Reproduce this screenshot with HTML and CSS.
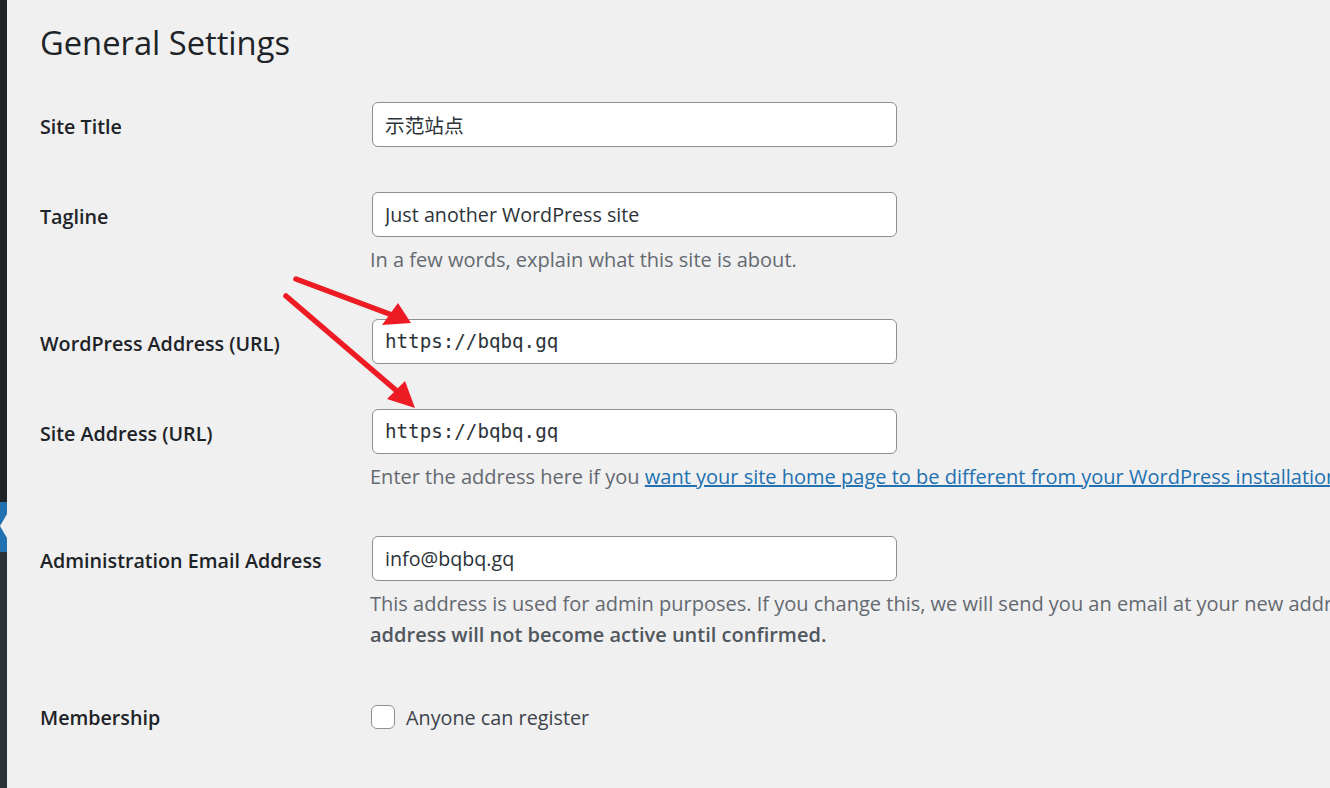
FILE: index.html
```html
<!DOCTYPE html>
<html lang="en">
<head>
<meta charset="utf-8">
<title>General Settings</title>
<link rel="stylesheet" href="styles.css">
</head>
<body>
<nav class="adminmenu">
  <div class="menu-top"></div>
  <div class="menu-current"></div>
  <div class="menu-sub"></div>
</nav>
<main class="content">
  <h1 class="title">General Settings</h1>
  <form class="settings">
    <div class="row">
      <label class="label" for="blogname">Site Title</label>
      <div class="field"><input class="text" id="blogname" type="text" value="示范站点"></div>
    </div>
    <div class="row">
      <label class="label" for="blogdescription">Tagline</label>
      <div class="field">
        <input class="text" id="blogdescription" type="text" value="Just another WordPress site">
        <p class="desc">In a few words, explain what this site is about.</p>
      </div>
    </div>
    <div class="row">
      <label class="label" for="siteurl">WordPress Address (URL)</label>
      <div class="field"><input class="text code" id="siteurl" type="text" value="https://bqbq.gq"></div>
    </div>
    <div class="row">
      <label class="label" for="home">Site Address (URL)</label>
      <div class="field">
        <input class="text code" id="home" type="text" value="https://bqbq.gq">
        <p class="desc">Enter the address here if you <a href="#">want your site home page to be different from your WordPress installation directory</a>.</p>
      </div>
    </div>
    <div class="row">
      <label class="label" for="email">Administration Email Address</label>
      <div class="field">
        <input class="text" id="email" type="text" value="info@bqbq.gq">
        <p class="desc">This address is used for admin purposes. If you change this, we will send you an email at your new address to confirm it. <strong>The new</strong><br><strong>address will not become active until confirmed.</strong></p>
      </div>
    </div>
    <div class="row row-check">
      <span class="label">Membership</span>
      <div class="field">
        <label class="check"><input type="checkbox" class="box"> Anyone can register</label>
      </div>
    </div>
  </form>
</main>
<svg class="annot" width="1330" height="788" viewBox="0 0 1330 788" aria-hidden="true">
  <g stroke="#ed1c24" stroke-width="5.5" stroke-linecap="round" fill="none">
    <line x1="296" y1="279" x2="392" y2="315"/>
    <line x1="286" y1="296" x2="398" y2="392"/>
  </g>
  <g fill="#ed1c24">
    <polygon points="411,323 382,325 398,303"/>
    <polygon points="415,408 387,399 405,381"/>
  </g>
</svg>
</body>
</html>
```

FILE: styles.css
```css
html, body {
  margin: 0;
  padding: 0;
}
body {
  width: 1330px;
  height: 788px;
  overflow: hidden;
  display: flex;
  background: #f0f0f1;
  font-family: "Open Sans", "Noto Sans", "Noto Sans CJK SC", sans-serif;
  color: #1d2327;
  position: relative;
}
.adminmenu {
  width: 7px;
  flex: none;
  display: flex;
  flex-direction: column;
  background: #1d2327;
}
.menu-top {
  height: 502px;
}
.menu-current {
  height: 50px;
  background: #2271b1;
  position: relative;
}
.menu-current::after {
  content: "";
  position: absolute;
  right: 0;
  top: 12px;
  border-style: solid;
  border-width: 12px 7px 12px 0;
  border-color: transparent #f0f0f1 transparent transparent;
}
.menu-sub {
  flex: 1;
  background: #2c3338;
}
.content {
  flex: 1;
  min-width: 0;
  padding-left: 33px;
}
.title {
  margin: 0;
  padding-top: 20px;
  font-size: 32.7px;
  font-weight: 400;
  line-height: 45px;
  color: #1d2327;
}
.settings {
  margin-top: 14px;
}
.row {
  display: flex;
  align-items: flex-start;
  padding: 22.5px 0;
}
.label {
  width: 332px;
  flex: none;
  font-size: 19.7px;
  font-weight: 600;
  line-height: 45px;
  padding-top: 2px;
  margin-bottom: -2px;
  color: #1d2327;
}
.field {
  flex: 1;
  min-width: 0;
}
.text {
  display: block;
  box-sizing: border-box;
  width: 525px;
  height: 45px;
  margin: 0;
  padding: 0 12px;
  border: 1px solid #8c8f94;
  border-radius: 6px;
  background: #fff;
  color: #2c3338;
  font-family: "Open Sans", "Noto Sans CJK SC", sans-serif;
  font-size: 19.7px;
}
.text.code {
  font-family: "DejaVu Sans Mono", "Liberation Mono", monospace;
  font-size: 19.2px;
}
.desc {
  margin: 7px 0 -1px -2px;
  font-size: 20px;
  line-height: 31px;
  color: #646970;
  white-space: nowrap;
}
.desc a {
  color: #2271b1;
  text-decoration: underline;
}
.desc strong {
  font-weight: 600;
  color: #50575e;
}
.row-check .label {
  line-height: 47px;
  padding-top: 0;
  margin-bottom: 0;
}
.check {
  display: flex;
  align-items: center;
  height: 47px;
  margin-left: -1px;
  font-size: 19.8px;
  color: #3c434a;
}
.box {
  appearance: none;
  -webkit-appearance: none;
  width: 24px;
  height: 24px;
  margin: 0 11px 0 0;
  box-sizing: border-box;
  border: 1px solid #8c8f94;
  border-radius: 6px;
  background: #fff;
  flex: none;
}
.annot {
  position: absolute;
  left: 0;
  top: 0;
  pointer-events: none;
}
```
